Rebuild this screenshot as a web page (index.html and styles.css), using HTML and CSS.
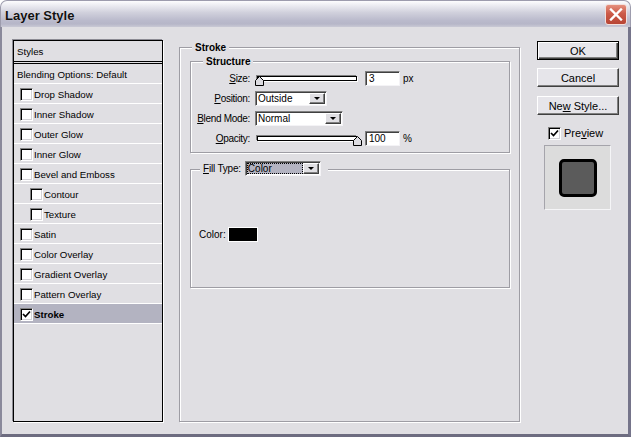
FILE: index.html
```html
<!DOCTYPE html>
<html>
<head>
<meta charset="utf-8">
<title>Layer Style</title>
<link rel="stylesheet" href="styles.css">
</head>
<body>
<div class="window">
  <div class="titlebar">
    <span class="title">Layer Style</span>
    <div class="close">
      <svg width="14" height="13" viewBox="0 0 14 13"><path d="M2 1.5 L12 11.5 M12 1.5 L2 11.5" stroke="#fff" stroke-width="2.4" stroke-linecap="square"/></svg>
    </div>
  </div>
  <div class="body">
    <div class="styles-list">
      <div class="list-head">Styles</div>
      <div class="row text">Blending Options: Default</div>
      <div class="row"><span class="cb"></span>Drop Shadow</div>
      <div class="row"><span class="cb"></span>Inner Shadow</div>
      <div class="row"><span class="cb"></span>Outer Glow</div>
      <div class="row"><span class="cb"></span>Inner Glow</div>
      <div class="row"><span class="cb"></span>Bevel and Emboss</div>
      <div class="row sub"><span class="cb"></span>Contour</div>
      <div class="row sub"><span class="cb"></span>Texture</div>
      <div class="row"><span class="cb"></span>Satin</div>
      <div class="row"><span class="cb"></span>Color Overlay</div>
      <div class="row"><span class="cb"></span>Gradient Overlay</div>
      <div class="row"><span class="cb"></span>Pattern Overlay</div>
      <div class="row selected"><span class="cb"><svg width="9" height="9" viewBox="0 0 9 9"><polyline points="1,4 3.5,6.5 8,1.5" fill="none" stroke="#000" stroke-width="1.7"/></svg></span>Stroke</div>
    </div>

    <div class="group outer">
      <div class="gtitle bold">Stroke</div>
      <div class="group structure">
        <div class="gtitle bold">Structure</div>
        <div class="frow">
          <span class="label"><u>S</u>ize:</span>
          <div class="slider"><div class="track"></div><svg class="thumb left" width="9" height="10" viewBox="0 0 9 10"><path d="M0.5 9.5 V4.5 L4.5 0.5 L8.5 4.5 V9.5 Z" fill="#dcdbe0" stroke="#000"/></svg></div>
          <span class="input">3</span>
          <span class="unit">px</span>
        </div>
        <div class="frow">
          <span class="label"><u>P</u>osition:</span>
          <div class="select w71"><span class="val">Outside</span><span class="arrow"><i></i></span></div>
        </div>
        <div class="frow">
          <span class="label"><u>B</u>lend Mode:</span>
          <div class="select w87"><span class="val">Normal</span><span class="arrow"><i></i></span></div>
        </div>
        <div class="frow">
          <span class="label"><u>O</u>pacity:</span>
          <div class="slider"><div class="track"></div><svg class="thumb right" width="9" height="10" viewBox="0 0 9 10"><path d="M0.5 9.5 V4.5 L4.5 0.5 L8.5 4.5 V9.5 Z" fill="#dcdbe0" stroke="#000"/></svg></div>
          <span class="input">100</span>
          <span class="unit">%</span>
        </div>
      </div>
      <div class="group fill">
        <div class="gtitle filltitle">
          <span class="ftlabel"><u>F</u>ill Type:</span>
          <div class="select w75 focused"><span class="val"><span class="hl">Color</span></span><span class="arrow"><i></i></span></div>
        </div>
        <div class="color-row">
          <span>Color:</span>
          <span class="swatch"></span>
        </div>
      </div>
    </div>

    <div class="side">
      <div class="btn default">OK</div>
      <div class="btn">Cancel</div>
      <div class="btn"><span>Ne<u>w</u> Style...</span></div>
      <div class="preview-row">
        <span class="cb"><svg width="9" height="9" viewBox="0 0 9 9"><polyline points="1,4 3.5,6.5 8,1.5" fill="none" stroke="#000" stroke-width="1.7"/></svg></span>
        <span>Pre<u>v</u>iew</span>
      </div>
      <div class="preview-box"><div class="preview-sq"></div></div>
    </div>
  </div>
</div>
</body>
</html>
```

FILE: styles.css
```css
html, body {
  margin: 0;
  padding: 0;
  background: #ffffff;
}

.window {
  width: 631px;
  height: 437px;
  box-sizing: border-box;
  display: flex;
  flex-direction: column;
  font-family: "Liberation Sans", Arial, sans-serif;
  font-size: 10px;
  color: #000;
}

.titlebar {
  height: 27px;
  box-sizing: border-box;
  border-radius: 7px 7px 0 0;
  border: 1px solid #9d9cad;
  border-bottom: none;
  background: linear-gradient(#fdfdfe 0%, #eeeef3 15%, #d0d0dc 45%, #babacc 75%, #b6b6c8 88%, #c9c9d5 100%);
  display: flex;
  align-items: center;
  justify-content: space-between;
  padding: 0 3px 0 4px;
}

.title {
  font-weight: bold;
  font-size: 13px;
  color: #111;
  text-shadow: 0 0 1px rgba(255,255,255,0.6);
  margin-top: 2px;
}

.close {
  width: 22px;
  height: 21px;
  box-sizing: border-box;
  border: 1px solid #f3e0dc;
  border-radius: 3px;
  background: linear-gradient(#e5907e, #cc5a48 45%, #b84534);
  display: flex;
  align-items: center;
  justify-content: center;
  margin-top: 1px;
}

.body {
  flex: 1;
  background: #e0dfe3;
  border-left: 2px solid #8a899b;
  border-right: 3px solid #75748a;
  border-bottom: 3px solid #6d6c80;
  display: flex;
  align-items: flex-start;
}

/* Styles list */
.styles-list {
  margin: 13px 0 0 11px;
  width: 150px;
  height: 382px;
  box-sizing: border-box;
  border: 1px solid #000;
  box-shadow: -1px -1px 0 #8c8b94, 1px 1px 0 #ffffff;
  font-size: 9.7px;
}

.list-head {
  height: 23px;
  box-sizing: border-box;
  border-bottom: 3px double #000;
  padding-left: 3px;
  display: flex;
  align-items: center;
}

.row {
  height: 20px;
  box-sizing: border-box;
  border-bottom: 1px solid #ffffff;
  display: flex;
  align-items: center;
  padding-left: 6px;
  padding-top: 1px;
}

.row.text { padding-left: 3px; }
.row.sub { padding-left: 16px; }
.row.selected {
  background: #b3b3c1;
  font-weight: bold;
}

.cb {
  width: 13px;
  height: 13px;
  box-sizing: border-box;
  background: #fff;
  border: 1px solid;
  border-color: #808080 #ffffff #ffffff #808080;
  box-shadow: inset 1px 1px 0 #000, inset -1px -1px 0 #d4d3d8;
  margin-right: 1px;
  display: inline-flex;
  align-items: center;
  justify-content: center;
  flex: none;
}

/* Groups */
.group {
  box-sizing: border-box;
  border: 1px solid #9e9da4;
  box-shadow: inset 1px 1px 0 #ffffff, 1px 1px 0 #ffffff;
}

.outer {
  margin: 20px 0 0 16px;
  width: 341px;
  height: 375px;
}

.gtitle {
  width: fit-content;
  height: 13px;
  line-height: 13px;
  margin: -7px 0 0 12px;
  padding: 0 3px;
  background: #e0dfe3;
}

.bold { font-weight: bold; }

.structure {
  margin: 7px 0 0 10px;
  width: 320px;
  height: 92px;
}

.frow {
  height: 20px;
  display: flex;
  align-items: center;
  letter-spacing: -0.3px;
}

.label {
  width: 59px;
  text-align: right;
  margin-right: 5px;
  flex: none;
}

.slider {
  position: relative;
  width: 102px;
  height: 12px;
  display: flex;
  align-items: center;
}

.track {
  margin-left: 2px;
  width: 100px;
  height: 5px;
  box-sizing: border-box;
  background: #fff;
  border: 1px solid #000;
  box-shadow: -1px -1px 0 #808080, 1px 1px 0 #fff;
}

.thumb {
  position: absolute;
  top: 4px;
}
.thumb.left { left: 0; }
.thumb.right { left: 98px; }

.input {
  margin-left: 8px;
  width: 35px;
  height: 15px;
  box-sizing: border-box;
  background: #fff;
  border: 1px solid;
  border-color: #808080 #f4f3f6 #f4f3f6 #808080;
  box-shadow: inset 1px 1px 0 #404040;
  padding-left: 3px;
  line-height: 13px;
  letter-spacing: 0;
}

.unit {
  margin-left: 3px;
  letter-spacing: 0;
}

.select {
  height: 15px;
  box-sizing: border-box;
  background: #fff;
  border: 1px solid;
  border-color: #808080 #f4f3f6 #f4f3f6 #808080;
  box-shadow: inset 1px 1px 0 #404040;
  display: flex;
  align-items: stretch;
  padding: 1px 1px 1px 1px;
  letter-spacing: 0;
}

.w71 { width: 72px; }
.w87 { width: 88px; }
.w75 { width: 76px; }

.select .val {
  flex: 1;
  line-height: 11px;
  padding-left: 1px;
  display: flex;
}

.select .arrow {
  width: 16px;
  box-sizing: border-box;
  background: #e0dfe3;
  border: 1px solid;
  border-color: #ffffff #404040 #404040 #ffffff;
  box-shadow: inset -1px -1px 0 #808080;
  display: flex;
  align-items: center;
  justify-content: center;
}

.select .arrow i {
  width: 0;
  height: 0;
  border-left: 3px solid transparent;
  border-right: 3px solid transparent;
  border-top: 3px solid #000;
}

.focused .val { padding-left: 0; }
.hl {
  flex: 1;
  background: #b3b3c1;
  outline: 1px dotted #000;
  outline-offset: -1px;
  padding-left: 1px;
}

.fill {
  margin: 16px 0 0 10px;
  width: 320px;
  height: 119px;
}

.filltitle {
  height: 15px;
  line-height: 15px;
  margin: -9px 0 0 9px;
  padding: 0 7px 0 3px;
  display: flex;
  align-items: center;
}

.ftlabel {
  margin-right: 4px;
  letter-spacing: -0.2px;
}

.color-row {
  margin: 51px 0 0 8px;
  display: flex;
  align-items: center;
  height: 15px;
}

.swatch {
  margin-left: 2px;
  width: 30px;
  height: 15px;
  box-sizing: border-box;
  background: #000;
  border: 1px solid #fff;
}

/* Side */
.side {
  margin: 14px 0 0 17px;
  width: 82px;
  display: flex;
  flex-direction: column;
  font-size: 11px;
}

.btn {
  height: 19px;
  box-sizing: border-box;
  background: #e6e5ea;
  border: 1px solid;
  border-color: #ffffff #404040 #404040 #ffffff;
  box-shadow: inset -1px -1px 0 #808080;
  display: flex;
  align-items: center;
  justify-content: center;
  margin-bottom: 8px;
}

.btn.default {
  border: 1px solid #000;
  box-shadow: inset 1px 1px 0 #fff, inset -1px -1px 0 #404040, inset -2px -2px 0 #808080;
}

.btn:nth-child(3) { margin-top: 1px; }

.preview-row {
  display: flex;
  align-items: center;
  height: 14px;
  margin: 3px 0 0 11px;
}

.preview-row .cb { margin-right: 3px; }

.preview-box {
  margin: 5px 0 0 7px;
  width: 67px;
  height: 65px;
  box-sizing: border-box;
  background: #dcdcdc;
  border: 1px solid;
  border-color: #a5a4ab #f5f5f7 #f5f5f7 #a5a4ab;
  display: flex;
  align-items: center;
  justify-content: center;
}

.preview-sq {
  width: 38px;
  height: 38px;
  box-sizing: border-box;
  background: #5b5b5b;
  border: 3px solid #000;
  border-radius: 5px;
}
```
